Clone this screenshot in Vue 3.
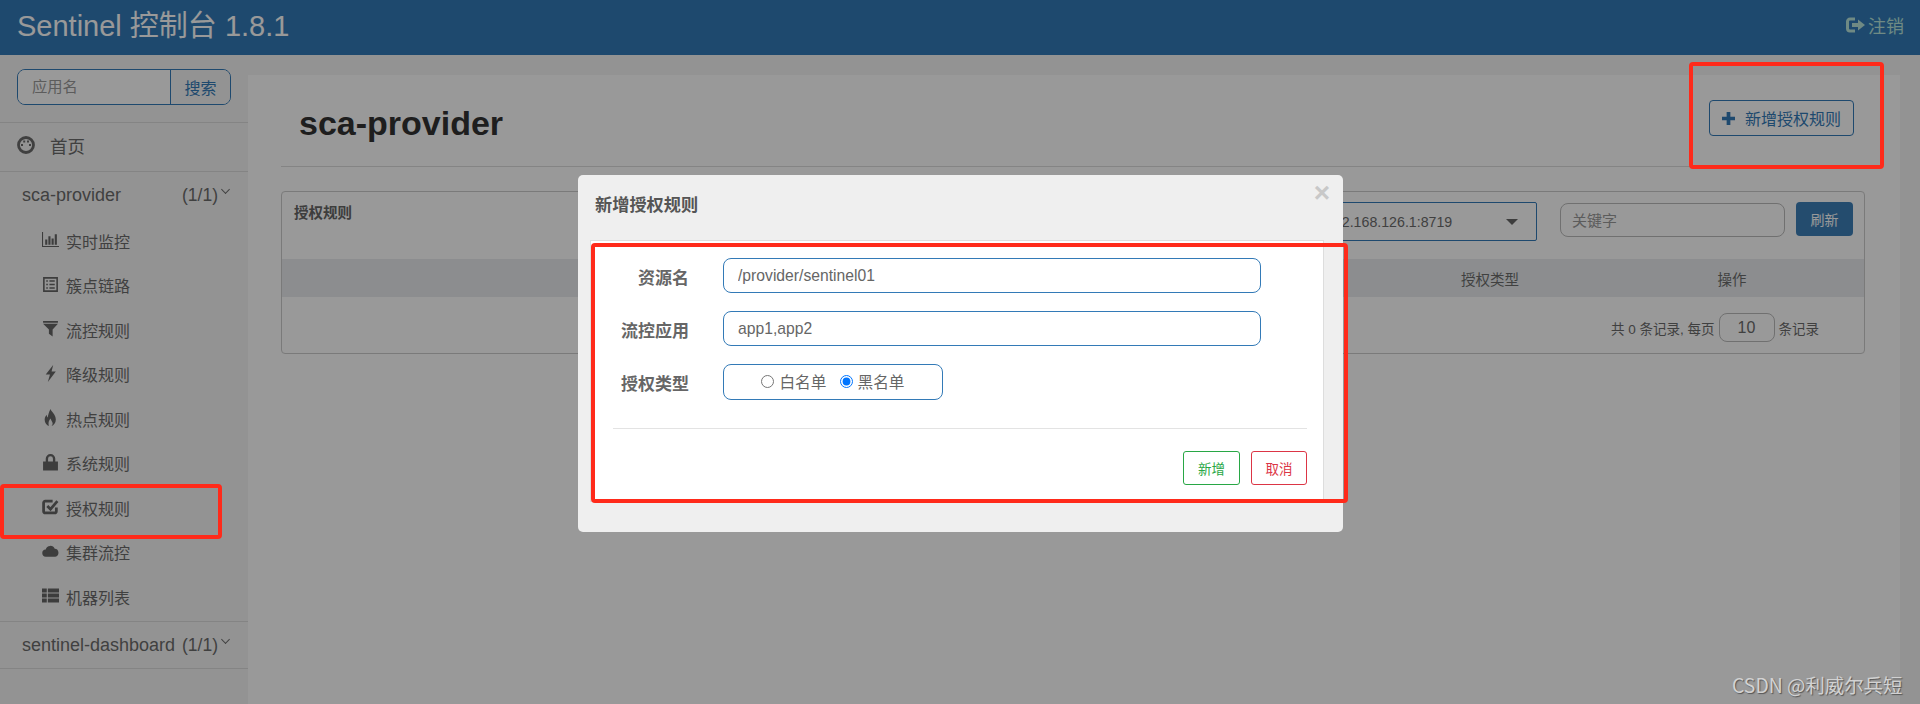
<script setup>
import { ref } from 'vue'

const navItems = [
  { label: '实时监控', fill: 'M0 1h1v13h15v1H0z M3 8h2v5H3z M6 5h2v8H6z M9 7h2v6H9z M12 3h2v10h-2z' },
  { label: '簇点链路', fill: 'M1 1h14v14H1z M2.500 2.500v11h11v-11z M4 4h1.500v1.500H4z M7 4h5v1.500H7z M4 7.200h1.500v1.500H4z M7 7.200h5v1.500H7z M4 10.500h1.500V12H4z M7 10.500h5V12H7z' },
  { label: '流控规则', fill: 'M1 1h14v1.500H1z M1 3.500h14L10 9v6.500L6.500 13V9z' },
  { label: '降级规则', fill: 'M10.500 0L3.500 9h4L5.500 16l7.500-10H9z' },
  { label: '热点规则', fill: 'M8 0c1 3 5 5 5 10 0 3-2 5-4 6 1-1 1.500-2.500.5-4-.5-1-1-1.500-1.500-3-1 1.500-2.500 3-1.500 7-2-1-4-3-4-6 0-2 1-3.500 2-4.500 0 1 .3 2 1 2.500C5.500 6 6.500 3 8 0z' },
  { label: '系统规则', fill: 'M1 7h14v8.500H1z M3.500 7V4.500a4.500 4.500 0 0 1 9 0V7h-2.200V4.500a2.300 2.300 0 0 0-4.600 0V7z' },
  { label: '授权规则', line: 'M13.500 9v3.500a1.500 1.500 0 0 1-1.500 1.500H3a1.500 1.500 0 0 1-1.500-1.500v-8A1.500 1.500 0 0 1 3 3h7 M5 7.500l3 3 6.500-7.500' },
  { label: '集群流控', fill: 'M4 13a3.500 3.500 0 0 1-.5-7A4.500 4.500 0 0 1 12 5.500a3.800 3.800 0 0 1 .5 7.500z' },
  { label: '机器列表', fill: 'M0 1.500h4.500v3.600H0z M5.500 1.500H16v3.600H5.500z M0 6.200h4.500v3.600H0z M5.500 6.200H16v3.600H5.500z M0 10.900h4.500v3.600H0z M5.500 10.900H16v3.600H5.500z' }
]

const authType = ref('black')
</script>

<template>
  <div class="page">
    <header class="topbar">
      <span class="brand">Sentinel 控制台 1.8.1</span>
      <span class="logout">
        <svg class="logout__icon" viewBox="0 0 20 16">
          <path d="M9 2H4a2.500 2.500 0 0 0-2.500 2.500v7A2.500 2.500 0 0 0 4 14h5" fill="none" stroke="currentColor" stroke-width="3" />
          <path d="M6 6h6V2.500l7 5.500-7 5.500V10H6z" fill="currentColor" />
        </svg>
        注销
      </span>
    </header>

    <div class="body">
      <aside class="sidebar">
        <div class="search">
          <input class="search__input" type="text" placeholder="应用名">
          <button class="search__btn" type="button">搜索</button>
        </div>

        <div class="home">
          <svg class="home__icon" viewBox="0 0 18 18">
            <circle cx="9" cy="9" r="7.500" fill="none" stroke="currentColor" stroke-width="2.800" />
            <path d="M4 8h2v2H4z M12 8h2v2h-2z M6.200 4.500h2v2h-2z M10 4.500h2v2h-2z" fill="currentColor" />
          </svg>
          <span>首页</span>
        </div>

        <div class="app">
          <span>sca-provider</span>
          <span class="app__count">(1/1)<i class="chevron"></i></span>
        </div>

        <ul class="nav">
          <li v-for="item in navItems" :key="item.label" class="nav__item">
            <svg class="nav__icon" viewBox="0 0 16 16">
              <path v-if="item.fill" :d="item.fill" fill="currentColor" fill-rule="evenodd" />
              <path v-if="item.line" :d="item.line" fill="none" stroke="currentColor" stroke-width="2.600" />
            </svg>
            <span>{{ item.label }}</span>
          </li>
        </ul>

        <div class="app app--last">
          <span>sentinel-dashboard</span>
          <span class="app__count">(1/1)<i class="chevron"></i></span>
        </div>
      </aside>

      <main class="main">
        <div class="main__head">
          <h1 class="title">sca-provider</h1>
          <button class="add-btn" type="button">
            <svg class="add-btn__icon" viewBox="0 0 14 14">
              <path d="M5 0h4v5h5v4H9v5H5V9H0V5h5z" fill="currentColor" />
            </svg>
            新增授权规则
          </button>
        </div>

        <section class="card">
          <div class="card__bar">
            <span class="card__title">授权规则</span>
            <div class="machine">
              <span>192.168.126.1:8719</span>
              <i class="caret"></i>
            </div>
            <input class="keyword" type="text" placeholder="关键字">
            <button class="refresh" type="button">刷新</button>
          </div>
          <div class="table-head">
            <span></span>
            <span>授权类型</span>
            <span>操作</span>
          </div>
          <div class="card__foot">
            <span>共 0 条记录, 每页</span>
            <input class="page-size" type="text" value="10">
            <span>条记录</span>
          </div>
        </section>
      </main>
    </div>

    <div class="overlay">
      <div class="modal">
        <div class="modal__head">
          <span class="modal__title">新增授权规则</span>
          <span class="modal__close">×</span>
        </div>
        <form class="modal__body" @submit.prevent>
          <div class="form">
            <label class="form__label">资源名</label>
            <input class="form__input" type="text" value="/provider/sentinel01">
            <label class="form__label">流控应用</label>
            <input class="form__input" type="text" value="app1,app2">
            <label class="form__label">授权类型</label>
            <div class="form__radios">
              <label class="radio"><input v-model="authType" type="radio" value="white">白名单</label>
              <label class="radio"><input v-model="authType" type="radio" value="black">黑名单</label>
            </div>
          </div>
          <div class="modal__foot">
            <button class="btn btn--ok" type="button">新增</button>
            <button class="btn btn--cancel" type="button">取消</button>
          </div>
        </form>
      </div>
    </div>

    <div class="mark mark--nav"></div>
    <div class="mark mark--add"></div>
    <div class="mark mark--form"></div>
    <div class="watermark">CSDN @利威尔兵短</div>
  </div>
</template>

<style>
body {
  background: #f5f5f5;
}
</style>

<style scoped>
.page {
  position: relative;
  height: 704px;
  overflow: hidden;
  font-family: "Liberation Sans", "Noto Sans CJK SC", sans-serif;
  font-size: 16px;
  color: #6c6c6c;
}
button, input {
  font-family: inherit;
  box-sizing: border-box;
}

.topbar {
  display: flex;
  align-items: center;
  justify-content: space-between;
  height: 55px;
  padding: 0 16px 0 17px;
  background: #337ab7;
}
.brand {
  margin-top: -9px;
  font-size: 29px;
  color: #fff;
}
.logout {
  display: flex;
  align-items: center;
  margin-top: -6px;
  gap: 2px;
  font-size: 18px;
  color: #b9e6dd;
}
.logout__icon {
  width: 20px;
  height: 16px;
}

.body {
  display: flex;
  height: 649px;
}
.sidebar {
  width: 248px;
  flex-shrink: 0;
}

.search {
  display: flex;
  margin: 14px 17px 17px;
  height: 36px;
  border: 1px solid #337ab7;
  border-radius: 8px;
  overflow: hidden;
  box-sizing: border-box;
  width: 214px;
}
.search__input {
  width: 153px;
  border: 0;
  border-right: 1px solid #337ab7;
  padding: 0 14px;
  background: #fff;
  font-size: 15.300px;
}
.search__input::placeholder {
  color: #999;
}
.search__btn {
  flex: 1;
  border: 0;
  padding: 0;
  background: #f5f5f5;
  color: #337ab7;
  font-size: 16px;
}

.home {
  display: flex;
  align-items: center;
  gap: 15px;
  height: 48px;
  padding-left: 17px;
  border-top: 1px solid #ddd;
  border-bottom: 1px solid #ddd;
  font-size: 17.500px;
}
.home span {
  margin-top: -4px;
}
.home__icon {
  width: 18px;
  height: 18px;
  margin-top: -4px;
}

.app {
  display: flex;
  justify-content: space-between;
  align-items: center;
  height: 47px;
  padding: 0 18px 0 22px;
  font-size: 18px;
}
.app--last {
  height: 46px;
  border-top: 1px solid #ddd;
  border-bottom: 1px solid #ddd;
}
.app__count {
  position: relative;
  padding-right: 12px;
  font-size: 17.500px;
}
.chevron {
  position: absolute;
  right: 1px;
  top: 1px;
  width: 6px;
  height: 6px;
  border-right: 1.500px solid #6c6c6c;
  border-bottom: 1.500px solid #6c6c6c;
  transform: rotate(45deg) scale(.9);
}

.nav {
  list-style: none;
  margin: 0;
  padding: 0 0 1.500px;
}
.nav__item {
  display: flex;
  align-items: center;
  gap: 7px;
  height: 44.500px;
  padding-left: 42px;
  font-size: 16px;
}
.nav__item span {
  margin-top: -1px;
}
.nav__icon {
  width: 17px;
  height: 17px;
  margin-top: -3px;
  color: #666;
}

.main {
  flex: 1;
  margin: 20px 20px 0 0;
  padding: 0 35px 0 33px;
  background: #fff;
}
.main__head {
  display: flex;
  align-items: center;
  justify-content: space-between;
  height: 91px;
  padding: 0 11px 0 18px;
  border-bottom: 1px solid #ddd;
}
.title {
  margin: 6px 0 0;
  font-size: 34px;
  line-height: 1.2;
  color: #333;
}
.add-btn {
  display: flex;
  align-items: center;
  justify-content: center;
  gap: 10px;
  width: 145px;
  height: 36px;
  margin-top: -5px;
  border: 1px solid #337ab7;
  border-radius: 4px;
  background: #fff;
  color: #337ab7;
  font-size: 16px;
}
.add-btn__icon {
  width: 13px;
  height: 13px;
}

.card {
  margin-top: 24px;
  height: 163px;
  border: 1px solid #ccc;
  border-radius: 4px;
  box-sizing: border-box;
}
.card__bar {
  display: flex;
  align-items: flex-start;
  height: 67px;
  padding: 11px 11px 0 12px;
  box-sizing: border-box;
}
.card__title {
  flex: 1;
  margin-top: -2px;
  font-size: 14.500px;
  font-weight: bold;
  color: #666;
}
.machine {
  display: flex;
  align-items: center;
  justify-content: space-between;
  width: 237px;
  height: 39px;
  margin-top: -1px;
  box-sizing: border-box;
  padding: 0 18px 0 25px;
  border: 1px solid #337ab7;
  border-radius: 2px;
  font-size: 14.200px;
}
.caret {
  width: 0;
  height: 0;
  border-left: 6px solid transparent;
  border-right: 6px solid transparent;
  border-top: 6px solid #666;
}
.keyword {
  width: 225px;
  height: 34px;
  margin-left: 23px;
  padding: 0 11px;
  border: 1px solid #bbb;
  border-radius: 8px;
  background: #fff;
  font-size: 15px;
}
.keyword::placeholder {
  color: #999;
}
.refresh {
  width: 57px;
  height: 34px;
  margin: -1px 0 0 11px;
  border: 0;
  border-radius: 4px;
  background: #3d7fb8;
  color: #fff;
  font-size: 14px;
}
.table-head {
  display: grid;
  grid-template-columns: 1fr 220px 264px;
  align-items: center;
  height: 38px;
  background: #e9ecef;
  text-align: center;
  font-size: 14.500px;
}
.card__foot {
  display: flex;
  align-items: center;
  justify-content: flex-end;
  gap: 4px;
  height: 56px;
  padding: 5px 45px 0 0;
  box-sizing: border-box;
  font-size: 13.500px;
}
.page-size {
  width: 56px;
  height: 29px;
  border: 1px solid #bbb;
  border-radius: 8px;
  background: #fff;
  color: #6c6c6c;
  text-align: center;
  font-size: 16px;
}

.overlay {
  position: absolute;
  inset: 0;
  background: rgba(0, 0, 0, .4);
}
.modal {
  position: absolute;
  left: 578px;
  top: 175px;
  width: 765px;
  height: 357px;
  background: #efefef;
  border-radius: 5px;
}
.modal__head {
  position: relative;
  height: 65px;
  padding: 16px 0 0 17px;
  box-sizing: border-box;
}
.modal__title {
  font-size: 17.200px;
  font-weight: bold;
  color: #555;
}
.modal__close {
  position: absolute;
  right: 13px;
  top: 2px;
  font-size: 28px;
  line-height: 32px;
  font-weight: bold;
  color: #c8c8c8;
}
.modal__body {
  margin-left: 12px;
  width: 734px;
  height: 262px;
  padding: 17px 16px 0 22px;
  box-sizing: border-box;
  background: #fff;
  border: 1px solid #ddd;
}
.form {
  display: grid;
  grid-template-columns: 110px 1fr;
  grid-auto-rows: 35.500px;
  align-items: center;
  row-gap: 17.500px;
  height: 170px;
  border-bottom: 1px solid #e3e3e3;
  align-content: start;
}
.form__label {
  margin-top: 1px;
  padding-right: 34px;
  text-align: right;
  font-size: 17px;
  font-weight: bold;
  color: #666;
  white-space: nowrap;
}
.form__input {
  width: 538px;
  height: 35px;
  padding: 0 14px;
  border: 1px solid #337ab7;
  border-radius: 8px;
  background: #fff;
  color: #666;
  font-size: 15.700px;
}
.form__radios {
  display: flex;
  justify-content: center;
  align-items: center;
  gap: 13px;
  width: 220px;
  height: 36px;
  box-sizing: border-box;
  border: 1px solid #337ab7;
  border-radius: 8px;
  font-size: 15.700px;
  color: #666;
}
.radio {
  display: flex;
  align-items: center;
  gap: 5px;
}
.radio input {
  width: 13px;
  height: 13px;
  margin: 0;
  accent-color: #0075ff;
}
.modal__foot {
  display: flex;
  justify-content: flex-end;
  gap: 11px;
  padding-top: 22px;
}
.btn {
  width: 57px;
  height: 34px;
  padding: 0;
  background: #fff;
  border-radius: 3px;
  font-size: 13.500px;
}
.btn--ok {
  border: 1px solid #28a745;
  color: #28a745;
}
.btn--cancel {
  width: 56px;
  border: 1px solid #dc3545;
  color: #dc3545;
}

.mark {
  position: absolute;
  box-sizing: border-box;
  border: 4px solid #ff2a1a;
  border-radius: 4px;
}
.mark--nav {
  left: 0;
  top: 484px;
  width: 222px;
  height: 55px;
}
.mark--add {
  left: 1689px;
  top: 62px;
  width: 195px;
  height: 107px;
}
.mark--form {
  left: 591px;
  top: 243px;
  width: 757px;
  height: 260px;
}

.watermark {
  position: absolute;
  left: 1732px;
  top: 672px;
  font-family: "Noto Sans CJK SC", "Noto Sans", sans-serif;
  font-size: 19.400px;
  line-height: 26px;
  white-space: nowrap;
  color: #d2d2d2;
  text-shadow: 1px 1px 1px #555;
}
</style>
